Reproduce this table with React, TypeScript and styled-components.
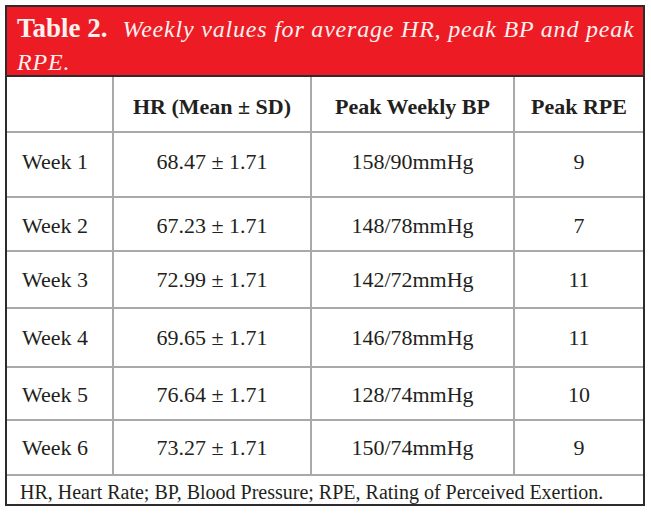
import React from 'react';
import styled, { createGlobalStyle } from 'styled-components';

const serif = `"Liberation Serif", "Times New Roman", Times, serif`;

const GlobalStyle = createGlobalStyle`
  html, body {
    margin: 0;
    padding: 0;
    background: #ffffff;
  }
  body {
    font-family: ${serif};
    color: #231f20;
  }
`;

const Frame = styled.div`
  margin: 5px 0 0 5px;
  width: 636px;
  border: 2px solid #2e2b2c;
  background: #ffffff;
  font-family: ${serif};
`;

const TitleBar = styled.div`
  height: 70px;
  box-sizing: border-box;
  padding: 6px 4px 4px 10px;
  background: #ed1c24;
  border-bottom: 2px solid #2e2b2c;
  color: #fdf0f0;
  line-height: 30px;
`;

const TitleLabel = styled.span`
  font-weight: bold;
  font-size: 27px;
  margin-right: 15px;
`;

const TitleText = styled.span`
  font-style: italic;
  font-size: 24px;
  letter-spacing: 0.8px;
`;

const Row = styled.div<{ $height: number }>`
  display: grid;
  grid-template-columns: 107px 198px 203px 1fr;
  height: ${(p) => p.$height}px;
  box-sizing: border-box;
  border-bottom: 2px solid #a9a9a9;
`;

// $offset moves the text down (positive) or up (negative) inside its row
const Cell = styled.div<{ $align?: 'left' | 'center'; $offset?: number }>`
  display: flex;
  align-items: center;
  justify-content: ${(p) => (p.$align === 'left' ? 'flex-start' : 'center')};
  padding-left: ${(p) => (p.$align === 'left' ? '15px' : '0')};
  padding-top: ${(p) => Math.max(0, (p.$offset ?? 0) * 2)}px;
  padding-bottom: ${(p) => Math.max(0, -(p.$offset ?? 0) * 2)}px;
  border-right: 2px solid #a9a9a9;
  font-size: 22px;
  white-space: nowrap;

  &:last-child {
    border-right: none;
  }
`;

const HeadCell = styled(Cell)`
  font-weight: bold;
`;

const Footnote = styled.div`
  height: 28px;
  box-sizing: border-box;
  padding: 4px 0 0 13px;
  display: flex;
  align-items: center;
  font-size: 20px;
  white-space: nowrap;
`;

interface WeekRow {
  week: string;
  hr: string;
  bp: string;
  rpe: string;
  height: number;
  offset?: number;
}

const rows: WeekRow[] = [
  { week: 'Week 1', hr: '68.47 ± 1.71', bp: '158/90mmHg', rpe: '9', height: 65, offset: -3 },
  { week: 'Week 2', hr: '67.23 ± 1.71', bp: '148/78mmHg', rpe: '7', height: 54, offset: 2 },
  { week: 'Week 3', hr: '72.99 ± 1.71', bp: '142/72mmHg', rpe: '11', height: 57 },
  { week: 'Week 4', hr: '69.65 ± 1.71', bp: '146/78mmHg', rpe: '11', height: 59 },
  { week: 'Week 5', hr: '76.64 ± 1.71', bp: '128/74mmHg', rpe: '10', height: 53, offset: 1 },
  { week: 'Week 6', hr: '73.27 ± 1.71', bp: '150/74mmHg', rpe: '9', height: 55 }
];

const App: React.FunctionComponent = () => (
  <>
    <GlobalStyle />
    <Frame>
      <TitleBar>
        <TitleLabel>Table 2.</TitleLabel>
        <TitleText>Weekly values for average HR, peak BP and peak RPE.</TitleText>
      </TitleBar>
      <Row $height={56}>
        <HeadCell $offset={3} />
        <HeadCell $offset={3}>HR (Mean ± SD)</HeadCell>
        <HeadCell $offset={3}>Peak Weekly BP</HeadCell>
        <HeadCell $offset={3}>Peak RPE</HeadCell>
      </Row>
      {rows.map((r) => (
        <Row key={r.week} $height={r.height}>
          <Cell $align="left" $offset={r.offset}>{r.week}</Cell>
          <Cell $offset={r.offset}>{r.hr}</Cell>
          <Cell $offset={r.offset}>{r.bp}</Cell>
          <Cell $offset={r.offset}>{r.rpe}</Cell>
        </Row>
      ))}
      <Footnote>HR, Heart Rate; BP, Blood Pressure; RPE, Rating of Perceived Exertion.</Footnote>
    </Frame>
  </>
);

export default App;
